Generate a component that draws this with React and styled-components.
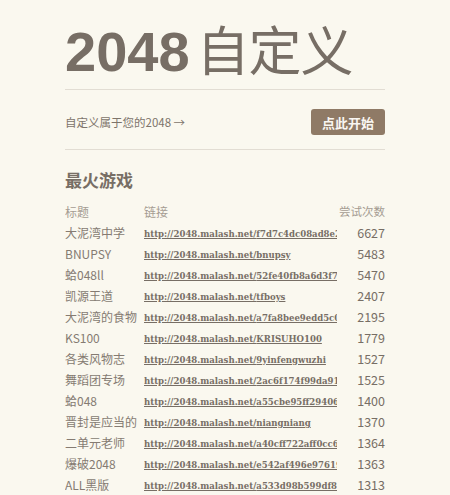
import React from "react";
import styled, { createGlobalStyle } from "styled-components";

const Global = createGlobalStyle`
  html, body { margin: 0; padding: 0; background: #faf8ef; }
  body {
    font-family: "Noto Sans CJK SC", "Liberation Sans", sans-serif;
    color: #776e65;
  }
`;

const Page = styled.div`
  width: 320px;
  margin: 0 auto;
  padding-top: 11px;
`;

const Title = styled.h1`
  margin: 0;
  height: 78px;
  line-height: 74px;
  font-family: "Liberation Sans", sans-serif;
  font-size: 56px;
  color: #776e65;
  white-space: nowrap;
`;

const Digits = styled.span`
  font-family: "Liberation Sans", sans-serif;
  font-weight: 700;
`;

const Cjk = styled.span`
  font-family: "Noto Sans CJK SC", sans-serif;
  font-weight: 400;
  font-size: 53px;
  letter-spacing: -1px;
  margin-left: 7px;
`;

const Rule = styled.hr`
  margin: 0;
  border: none;
  border-top: 1px solid #e2ddd3;
`;

const Intro = styled.div`
  box-sizing: border-box;
  display: flex;
  align-items: center;
  justify-content: space-between;
  height: 59px;
  padding-top: 5px;
`;

const IntroText = styled.span`
  font-size: 11.5px;
  color: #7d746b;
`;

const StartButton = styled.a`
  display: inline-flex;
  align-items: center;
  justify-content: center;
  width: 74px;
  height: 26px;
  background: #8f7a66;
  color: #f9f6f2;
  border-radius: 3px;
  font-family: "Noto Sans CJK SC", sans-serif;
  font-weight: 700;
  font-size: 13px;
  text-decoration: none;
`;

const Heading = styled.h2`
  margin: 0;
  padding-top: 18px;
  height: 24px;
  font-family: "Noto Sans CJK SC", sans-serif;
  font-weight: 700;
  font-size: 17px;
  line-height: 24px;
  color: #776e65;
`;

const Table = styled.div`
  margin-top: 9px;
  display: flex;
  flex-direction: column;
`;

const Row = styled.div`
  display: grid;
  grid-template-columns: 79px 193px 48px;
  height: 21px;
  align-items: center;
  font-size: 12px;
  line-height: 21px;
  color: ${(p) => (p.$head ? "#a59c92" : "#776e65")};
`;

const TitleCell = styled.span`
  white-space: nowrap;
  overflow: hidden;
  color: ${(p) => (p.$head ? "#a59c92" : "#857b72")};
`;

const LinkCell = styled.span`
  white-space: nowrap;
  overflow: hidden;
`;

const Link = styled.a`
  font-family: "DejaVu Serif Condensed", "DejaVu Serif", serif;
  font-stretch: condensed;
  font-weight: 700;
  font-size: 9.5px;
  color: #776e65;
  text-decoration: underline;
`;

const Count = styled.span`
  justify-self: end;
  white-space: nowrap;
  font-size: ${(p) => (p.$head ? "11.5px" : "12.5px")};
`;

const rows = [
  ["大泥湾中学", "f7d7c4dc08ad8e2a1b3c", 6627],
  ["BNUPSY", "bnupsy", 5483],
  ["蛤048ll", "52fe40fb8a6d3f79c0e1", 5470],
  ["凯源王道", "tfboys", 2407],
  ["大泥湾的食物", "a7fa8bee9edd5c0e2f1a", 2195],
  ["KS100", "KRISUHO100", 1779],
  ["各类风物志", "9yinfengwuzhi", 1527],
  ["舞蹈团专场", "2ac6f174f99da918b2c3", 1525],
  ["蛤048", "a55cbe95ff294063ab12", 1400],
  ["晋封是应当的", "niangniang", 1370],
  ["二单元老师", "a40cff722aff0cc6", 1364],
  ["爆破2048", "e542af496e976193cd1", 1363],
  ["ALL黑版", "a533d98b599df89a3e2", 1313],
];

export default function App() {
  return (
    <>
      <Global />
      <Page>
        <Title>
          <Digits>2048</Digits>
          <Cjk>自定义</Cjk>
        </Title>
        <Rule />
        <Intro>
          <IntroText>自定义属于您的2048 →</IntroText>
          <StartButton href="#">点此开始</StartButton>
        </Intro>
        <Rule />
        <Heading>最火游戏</Heading>
        <Table>
          <Row $head>
            <TitleCell $head>标题</TitleCell>
            <span>链接</span>
            <Count $head>尝试次数</Count>
          </Row>
          {rows.map(([t, slug, n]) => (
            <Row key={slug}>
              <TitleCell>{t}</TitleCell>
              <LinkCell>
                <Link href="#">http://2048.malash.net/{slug}</Link>
              </LinkCell>
              <Count>{n}</Count>
            </Row>
          ))}
        </Table>
      </Page>
    </>
  );
}
